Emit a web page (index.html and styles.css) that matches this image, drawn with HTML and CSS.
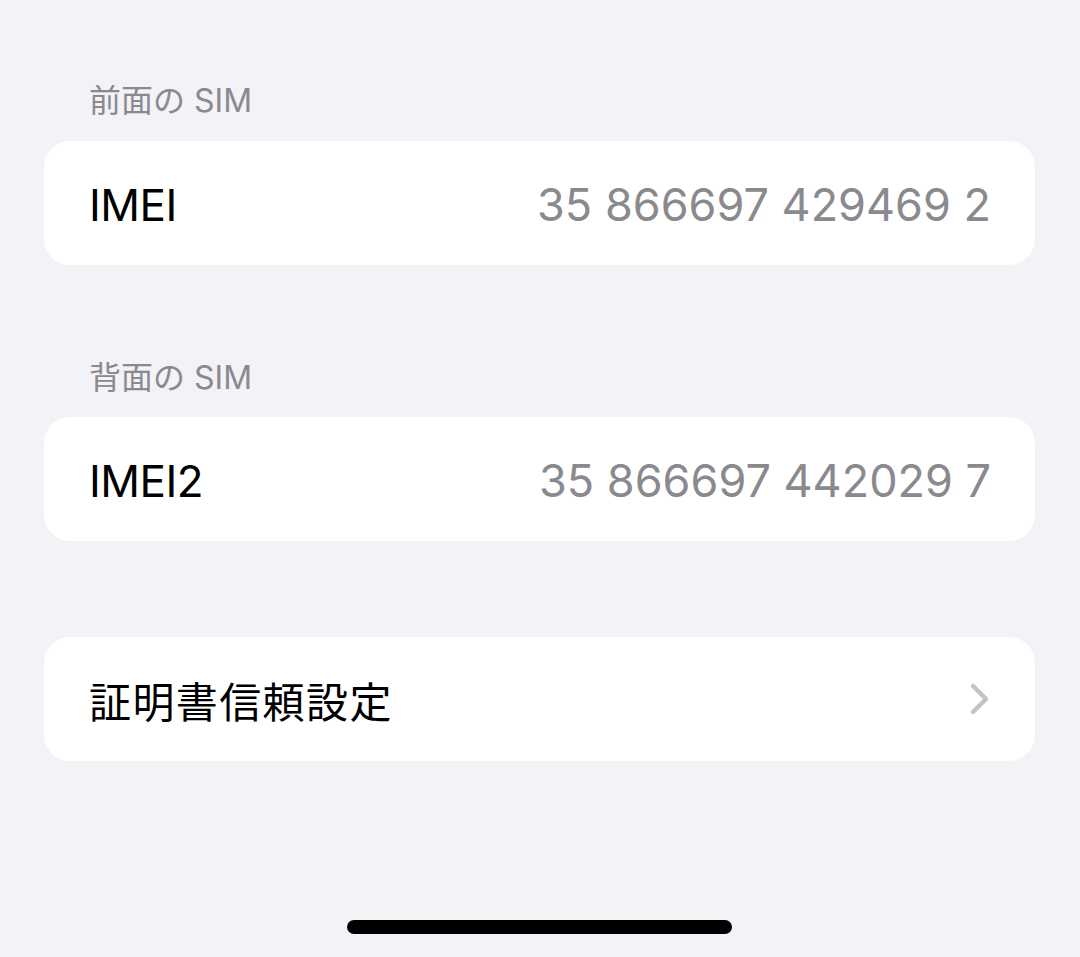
FILE: index.html
```html
<!DOCTYPE html>
<html lang="ja">
<head>
    <meta charset="UTF-8">
    <meta name="viewport" content="width=device-width, initial-scale=1.0">
    <title>情報</title>
    <link rel="stylesheet" href="styles.css">
</head>
<body>
    <div class="screen">
        <div class="section-title first">前面の SIM</div>
        <div class="card">
            <span class="label">IMEI</span>
            <span class="value">35 866697 429469 2</span>
        </div>

        <div class="section-title">背面の SIM</div>
        <div class="card">
            <span class="label">IMEI2</span>
            <span class="value">35 866697 442029 7</span>
        </div>

        <div class="card link-card">
            <span class="label">証明書信頼設定</span>
            <svg class="chevron" width="22" height="34" viewBox="0 0 22 34">
                <path d="M4 4 L17 17 L4 30" fill="none" stroke="#c4c4c7" stroke-width="4.5" stroke-linecap="round" stroke-linejoin="round"/>
            </svg>
        </div>

        <div class="home-bar"></div>
    </div>
</body>
</html>
```

FILE: styles.css
```css
body {
    margin: 0;
    padding: 0;
    background-color: #f2f2f7;
    font-family: "Inter", "Noto Sans CJK JP", sans-serif;
}
.screen {
    height: 957px;
    padding: 0 45px 0 44px;
    display: flex;
    flex-direction: column;
    box-sizing: border-box;
}
.section-title {
    font-size: 32px;
    line-height: 40px;
    color: #8a8a8e;
    padding-left: 45px;
    margin-top: 93px;
    margin-bottom: 19px;
}
.section-title.first {
    margin-top: 81px;
    margin-bottom: 20px;
}
.card {
    height: 124px;
    background: #ffffff;
    border-radius: 26px;
    display: flex;
    align-items: center;
    justify-content: space-between;
    padding: 0 44px 0 45px;
}
.label {
    font-size: 44px;
    color: #000000;
    letter-spacing: -0.5px;
    padding-top: 3px;
}
.value {
    font-size: 45px;
    color: #8a8a8e;
    padding-top: 2px;
}
.link-card {
    margin-top: 96px;
}
.link-card .label {
    font-size: 42px;
    letter-spacing: 1.4px;
    padding-top: 0;
}
.chevron {
    margin-right: 0;
}
.home-bar {
    align-self: center;
    width: 385px;
    height: 14px;
    background: #000000;
    border-radius: 7px;
    margin-top: 159px;
}
```
